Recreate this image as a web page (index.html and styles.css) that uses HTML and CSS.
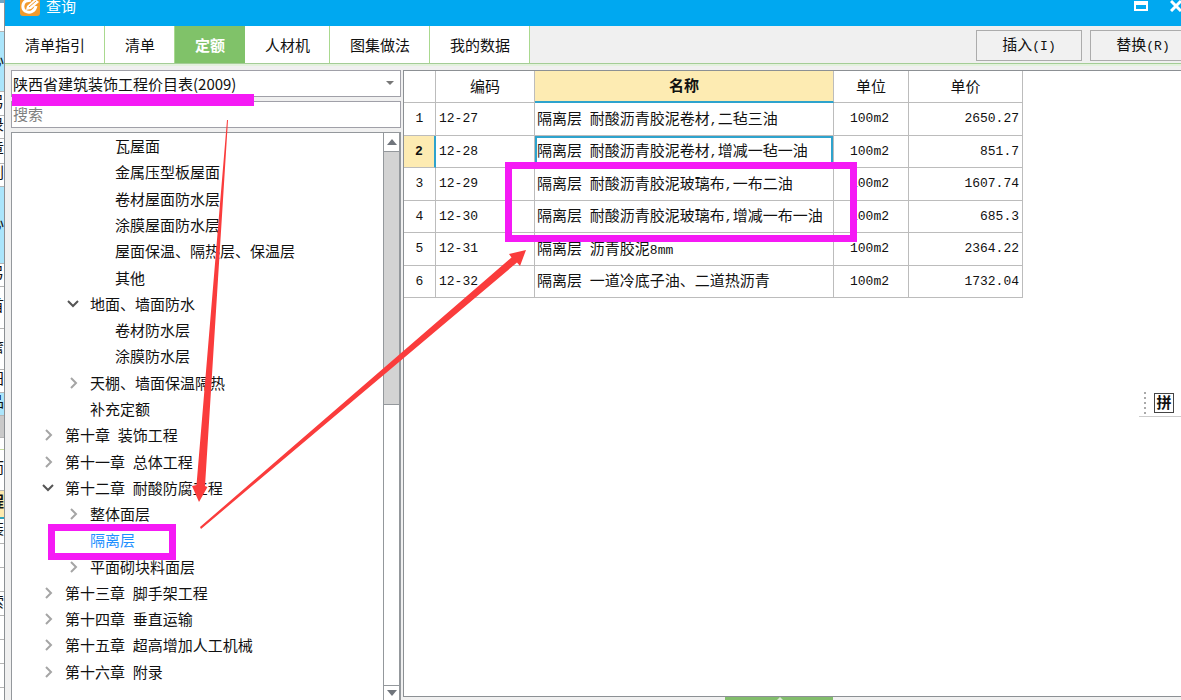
FILE: index.html
```html
<!DOCTYPE html>
<html lang="zh-CN">
<head>
<meta charset="utf-8">
<title>查询</title>
<link rel="stylesheet" href="styles.css">
</head>
<body>
<aside class="behind" aria-hidden="true">
  <div class="strip top h31"></div>
  <div class="strip cyan h60">心</div>
  <div class="strip h24">弓</div>
  <div class="strip h23">录</div>
  <div class="strip h25">章</div>
  <div class="strip h23">刘</div>
  <div class="strip cyan h77">心</div>
  <div class="strip h23">弓</div>
  <div class="strip h42">首</div>
  <div class="strip h41">詹</div>
  <div class="strip h23">田</div>
  <div class="strip cyan h23">品</div>
  <div class="strip gray h22"></div>
  <div class="strip lime h12"></div>
  <div class="strip h41">而</div>
  <div class="strip yellow h28">程</div>
  <div class="strip h25">装</div>
  <div class="strip h24"></div>
  <div class="strip h24"></div>
  <div class="strip h24">索</div>
  <div class="strip h24"></div>
  <div class="strip h24"></div>
  <div class="strip h24"></div>
  <div class="strip h24"></div>
</aside>

<main class="dialog">
  <header class="titlebar">
    <svg class="logo" viewBox="0 0 20 16">
      <rect width="20" height="20" y="-4" rx="3" fill="#f29a2b"/>
      <path d="M11 0 6 1C2 3 2 9 5 11c5 3 10 0 11-5" fill="none" stroke="#fff" stroke-width="3"/>
      <path d="m7 6 8-7 4 3-8 7-5 1z" fill="#fff"/>
      <path d="m9 7 7-6" stroke="#f29a2b" stroke-width="1"/>
    </svg>
    <h1 class="title">查询</h1>
    <div class="window-buttons">
      <button class="win" aria-label="最大化"><svg width="14" height="12" viewBox="0 0 14 12"><path d="M0 1h14v10H0z" fill="#fff"/><path d="M2 5h10v4H2z" fill="#00a8f0"/></svg></button>
      <button class="win" aria-label="关闭"><svg width="12" height="12" viewBox="0 0 12 12"><path d="m1 1 10 10M11 1 1 11" stroke="#fff" stroke-width="3"/></svg></button>
    </div>
  </header>

  <nav class="toolbar">
    <button class="tab">清单指引</button>
    <button class="tab">清单</button>
    <button class="tab active">定额</button>
    <button class="tab">人材机</button>
    <button class="tab">图集做法</button>
    <button class="tab">我的数据</button>
    <div class="actions">
      <button class="action">插入<span class="mono">(I)</span></button>
      <button class="action">替换<span class="mono">(R)</span></button>
    </div>
  </nav>

  <div class="content">
    <section class="side">
      <div class="select-box">
        <select class="book" aria-label="定额库"><option>陕西省建筑装饰工程价目表(2009)</option></select>
        <svg class="caret" width="8" height="5" viewBox="0 0 8 5"><path d="M0 0h8L4 4z" fill="#777"/></svg>
      </div>
      <input class="search" type="text" placeholder="搜索" aria-label="搜索">
      <div class="tree-box">
        <ul class="tree">
          <li class="node l2">瓦屋面</li>
          <li class="node l2">金属压型板屋面</li>
          <li class="node l2">卷材屋面防水层</li>
          <li class="node l2">涂膜屋面防水层</li>
          <li class="node l2">屋面保温、隔热层、保温层</li>
          <li class="node l2">其他</li>
          <li class="node l1"><svg class="chev" viewBox="0 0 12 12"><path d="m1 3 5 5 5-5" class="open"/></svg>地面、墙面防水</li>
          <li class="node l2">卷材防水层</li>
          <li class="node l2">涂膜防水层</li>
          <li class="node l1"><svg class="chev" viewBox="0 0 12 12"><path d="m4 1 5 5-5 5" class="shut"/></svg>天棚、墙面保温隔热</li>
          <li class="node l1">补充定额</li>
          <li class="node l0"><svg class="chev" viewBox="0 0 12 12"><path d="m4 1 5 5-5 5" class="shut"/></svg>第十章<span class="mono"> </span>装饰工程</li>
          <li class="node l0"><svg class="chev" viewBox="0 0 12 12"><path d="m4 1 5 5-5 5" class="shut"/></svg>第十一章<span class="mono"> </span>总体工程</li>
          <li class="node l0"><svg class="chev" viewBox="0 0 12 12"><path d="m1 3 5 5 5-5" class="open"/></svg>第十二章<span class="mono"> </span>耐酸防腐工程</li>
          <li class="node l1"><svg class="chev" viewBox="0 0 12 12"><path d="m4 1 5 5-5 5" class="shut"/></svg>整体面层</li>
          <li class="node l1 current">隔离层</li>
          <li class="node l1"><svg class="chev" viewBox="0 0 12 12"><path d="m4 1 5 5-5 5" class="shut"/></svg>平面砌块料面层</li>
          <li class="node l0"><svg class="chev" viewBox="0 0 12 12"><path d="m4 1 5 5-5 5" class="shut"/></svg>第十三章<span class="mono"> </span>脚手架工程</li>
          <li class="node l0"><svg class="chev" viewBox="0 0 12 12"><path d="m4 1 5 5-5 5" class="shut"/></svg>第十四章<span class="mono"> </span>垂直运输</li>
          <li class="node l0"><svg class="chev" viewBox="0 0 12 12"><path d="m4 1 5 5-5 5" class="shut"/></svg>第十五章<span class="mono"> </span>超高增加人工机械</li>
          <li class="node l0"><svg class="chev" viewBox="0 0 12 12"><path d="m4 1 5 5-5 5" class="shut"/></svg>第十六章<span class="mono"> </span>附录</li>
        </ul>
        <div class="scrollbar">
          <button class="scroll-end" aria-label="向上"><svg width="10" height="6" viewBox="0 0 10 6"><path d="M0 6h10L5 0z" fill="#70757c"/></svg></button>
          <div class="thumb"></div>
          <div class="track"></div>
          <button class="scroll-end" aria-label="向下"><svg width="10" height="6" viewBox="0 0 10 6"><path d="M0 0h10L5 6z" fill="#70757c"/></svg></button>
        </div>
      </div>
    </section>

    <section class="main">
      <div class="grid-box">
        <table class="grid">
          <colgroup><col class="c-no"><col class="c-code"><col class="c-name"><col class="c-unit"><col class="c-price"></colgroup>
          <thead>
            <tr><th></th><th>编码</th><th class="picked">名称</th><th>单位</th><th>单价</th></tr>
          </thead>
          <tbody>
            <tr><td class="no">1</td><td>12-27</td><td class="name">隔离层<span class="mono"> </span>耐酸沥青胶泥卷材<span class="mono">,</span>二毡三油</td><td class="unit">100m2</td><td class="price">2650.27</td></tr>
            <tr><td class="no picked">2</td><td>12-28</td><td class="name focus">隔离层<span class="mono"> </span>耐酸沥青胶泥卷材<span class="mono">,</span>增减一毡一油</td><td class="unit">100m2</td><td class="price">851.7</td></tr>
            <tr><td class="no">3</td><td>12-29</td><td class="name">隔离层<span class="mono"> </span>耐酸沥青胶泥玻璃布<span class="mono">,</span>一布二油</td><td class="unit">100m2</td><td class="price">1607.74</td></tr>
            <tr><td class="no">4</td><td>12-30</td><td class="name">隔离层<span class="mono"> </span>耐酸沥青胶泥玻璃布<span class="mono">,</span>增减一布一油</td><td class="unit">100m2</td><td class="price">685.3</td></tr>
            <tr><td class="no">5</td><td>12-31</td><td class="name">隔离层<span class="mono"> </span>沥青胶泥<span class="mono">8mm</span></td><td class="unit">100m2</td><td class="price">2364.22</td></tr>
            <tr><td class="no">6</td><td>12-32</td><td class="name">隔离层<span class="mono"> </span>一道冷底子油、二道热沥青</td><td class="unit">100m2</td><td class="price">1732.04</td></tr>
          </tbody>
        </table>
      </div>
      <div class="bottom"><svg class="handle" width="108" height="4" viewBox="0 0 108 4"><path d="M0 0h108v4H0z" fill="#82bd6c"/><path d="m51 4 4-4 4 4z" fill="#d9ecd2"/></svg></div>
    </section>
  </div>
</main>

<div class="ime">
  <svg width="3" height="24" viewBox="0 0 3 24"><path d="M1 1v22" stroke="#aaa" stroke-width="2" stroke-dasharray="2 3"/></svg>
  <span class="ime-mode">拼</span>
</div>

<svg class="marks" width="1181" height="700" viewBox="0 0 1181 700">
  <path d="M12 94h242v12H12z" fill="#f51af5"/>
  <path d="M51.500 527.500h121v29h-121zM508.500 165.500h345v73h-345z" fill="none" stroke="#f51af5" stroke-width="7"/>
  <path d="M227 120 196.500 485l-4.500 1 7 16 8.500-15-2.500-1 23-366z" fill="#fa3c3c"/>
  <path d="m200 527 311.500-269.500-2.500-3.500 17-4-6 16-3-3.500L201 529z" fill="#fa3c3c"/>
</svg>
</body>
</html>
```

FILE: styles.css
```css
* { box-sizing: border-box; }

body {
  margin: 0;
  height: 100vh;
  display: flex;
  position: relative;
  overflow: hidden;
  background: #f0f0f0;
  color: #111;
  font-family: "Liberation Mono", "Noto Sans CJK SC", monospace;
  font-size: 15px;
  line-height: 20px;
}

button, input, select { font: inherit; color: inherit; border-radius: 0; }
button { padding: 0; border: 0; background: none; }
.mono { font-size: 13px; white-space: pre; }

/* edge of the window underneath */
.behind { width: 5px; flex: none; overflow: hidden; border-right: 1px solid #8c9094; background: #fff; }
.strip { display: flex; align-items: center; justify-content: flex-end; overflow: hidden; border-bottom: 1px solid #b5b5b5; }
.top { border-top: 3px solid #6fa5c4; }
.cyan { background: #abe5fb; }
.gray { background: #c9c9c9; }
.lime { border-bottom-color: #c5dc9c; }
.yellow { background: #fdeaae; font-weight: bold; border-bottom: 2px solid #2ea3bd; }
.h12 { height: 12px; }
.h22 { height: 22px; }
.h23 { height: 23px; }
.h24 { height: 24px; }
.h25 { height: 25px; }
.h28 { height: 28px; }
.h31 { height: 32px; }
.h41 { height: 41px; }
.h42 { height: 42px; }
.h60 { height: 60px; }
.h77 { height: 77px; }

.dialog { flex: 1; min-width: 0; display: flex; flex-direction: column; overflow: hidden; }

.titlebar { height: 26px; flex: none; display: flex; align-items: flex-start; gap: 6px; padding-left: 15px; background: #00a8f0; color: #fff; }
.logo { width: 20px; height: 16px; overflow: hidden; }
.title { margin: 0; font-size: 15px; line-height: 18px; font-weight: normal; }
.window-buttons { display: flex; gap: 22px; margin-left: auto; margin-right: -1px; }
.win { display: flex; }

.toolbar { height: 40px; flex: none; display: flex; align-items: flex-start; border-bottom: 2px solid #e3f1dd; box-shadow: inset 0 -1px #a4cd96; }
.tab { height: 37px; padding: 6px 20px 0; background: #fff; box-shadow: inset -1px 0 #a9d98f; }
.active { background: #80c269; color: #fff; font-weight: bold; box-shadow: none; }
.actions { display: flex; gap: 8px; margin-left: auto; margin-right: -15px; padding-top: 4px; }
.action { width: 106px; height: 31px; padding-top: 3px; border: 1px solid #acacac; background: #f1f1f1; }

.content { flex: 1; min-height: 0; display: flex; gap: 2px; padding: 4px 0 0 6px; }
.side { width: 390px; flex: none; display: flex; flex-direction: column; gap: 4px; }
.select-box { display: flex; align-items: center; height: 27px; padding-right: 6px; border: 1px solid #a0a0a8; background: #fff; }
.book { flex: 1; appearance: none; border: 0; padding: 0 0 0 1px; background: none; font-family: "Noto Sans CJK SC", sans-serif; font-size: 15px; color: #111; }
.search { height: 27px; width: 100%; padding: 4px 0 0 1px; border: 1px solid #a0a0a8; background: #fff; }
.search::placeholder { color: #808080; opacity: 1; }
.tree-box { flex: 1; min-height: 0; display: flex; border: 1px solid #94989c; border-bottom: 0; background: #fff; }
.tree { flex: 1; display: flex; flex-direction: column; margin: 0; padding: 1px 0 14px; list-style: none; }
.node { flex: 1; display: flex; align-items: center; padding-top: 4px; white-space: nowrap; }
.l0 { padding-left: 53px; }
.l1 { padding-left: 78px; }
.l2 { padding-left: 103px; }
.current { color: #1e90ff; }
.chev { width: 12px; height: 12px; margin: 0 11px 6px -23px; fill: none; stroke-width: 2; }
.open { stroke: #555; }
.shut { stroke: #a5a5a5; }

.scrollbar { width: 17px; flex: none; display: flex; flex-direction: column; border-left: 1px solid #94989c; border-right: 1px solid #94989c; }
.scroll-end { height: 19px; display: flex; align-items: center; justify-content: center; border-bottom: 1px solid #94989c; }
.scroll-end:last-child { height: 15px; border-bottom: 0; border-top: 1px solid #94989c; }
.thumb { flex: 9; background: #d3d3d3; border-bottom: 1px solid #94989c; }
.track { flex: 10; }

.main { flex: 1; min-width: 0; display: flex; flex-direction: column; }
.grid-box { flex: 1; border: 1px solid #8c9094; border-right: 0; background: #fff; }
.grid { width: 619px; height: 227px; table-layout: fixed; border-collapse: separate; border-spacing: 0; }
.c-no { width: 32px; }
.c-code { width: 99px; }
.c-name { width: 299px; }
.c-unit { width: 75px; }
.c-price { width: 114px; }
.grid thead tr { height: 32px; }
.grid tbody tr { height: 32px; }
.grid th, .grid td { padding: 1px 3px 0; border: 0 solid #bcbcbc; border-width: 0 1px 1px 0; white-space: nowrap; font-size: 13px; }
.grid th { padding-top: 4px; font-size: 15px; font-weight: normal; }
.grid th.picked { background: #fdebb2; font-weight: bold; border-bottom: 2px solid #2ea3cd; }
.grid td.name { padding: 4px 0 0 2px; font-size: 15px; }
.grid td.focus { box-shadow: inset 0 0 0 2px #2ea3cd; }
.grid td.no { text-align: center; }
.grid td.no.picked { background: #fdebb2; font-weight: bold; border-right: 2px solid #2ea3cd; }
.grid td.unit { text-align: center; padding-right: 6px; }
.grid td.price { text-align: right; }
.bottom { height: 3px; flex: none; padding-left: 322px; overflow: hidden; }
.handle { display: block; }

/* floating input-method badge */
.ime { position: absolute; right: 0; top: 390px; width: 42px; height: 27px; padding-left: 5px; display: flex; align-items: center; gap: 7px; border-bottom: 1px solid #ccc; background: #fff; }
.ime-mode { width: 20px; height: 20px; padding-top: 4px; display: flex; align-items: center; justify-content: center; border: 1px solid #444; font-weight: bold; }

.marks { position: absolute; left: 0; top: 0; pointer-events: none; }
```
